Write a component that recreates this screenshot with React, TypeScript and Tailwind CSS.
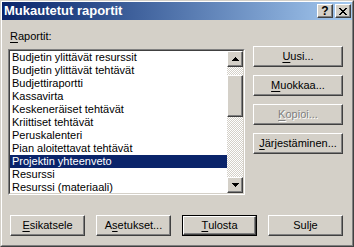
import React from "react";

const FONT = "font-['Liberation_Sans',Arial,sans-serif]";

const items = [
  "Budjetin ylittävät resurssit",
  "Budjetin ylittävät tehtävät",
  "Budjettiraportti",
  "Kassavirta",
  "Keskeneräiset tehtävät",
  "Kriittiset tehtävät",
  "Peruskalenteri",
  "Pian aloitettavat tehtävät",
  "Projektin yhteenveto",
  "Resurssi",
  "Resurssi (materiaali)",
];

function Raised({ className = "", children }: { className?: string; children?: React.ReactNode }) {
  return (
    <div
      className={
        "border border-t-white border-l-white border-b-[#404040] border-r-[#404040] bg-[#d4d0c8] shadow-[inset_-1px_-1px_0_#808080] " +
        className
      }
    >
      {children}
    </div>
  );
}

function Btn({
  children,
  w,
  def,
  disabled,
}: {
  children: React.ReactNode;
  w: string;
  def?: boolean;
  disabled?: boolean;
}) {
  const label = (
    <Raised
      className={
        "flex flex-1 items-center justify-center text-[11px] leading-[13px] " +
        (disabled ? "text-[#808080] [text-shadow:1px_1px_0_#ffffff]" : "text-black")
      }
    >
      {children}
    </Raised>
  );
  if (def) {
    return <div className={"flex h-[21px] border border-black " + w}>{label}</div>;
  }
  return <div className={"flex h-[21px] " + w}>{label}</div>;
}

function Arrow({ up }: { up?: boolean }) {
  return (
    <svg width="7" height="4" viewBox="0 0 7 4" shapeRendering="crispEdges">
      {up ? (
        <polygon points="3.5,0 7,4 0,4" fill="#000" />
      ) : (
        <polygon points="0,0 7,0 3.5,4" fill="#000" />
      )}
    </svg>
  );
}

function U({ children }: { children: React.ReactNode }) {
  return <span className="underline underline-offset-[2px]">{children}</span>;
}

export default function App() {
  return (
    <div className={"w-[354px] h-[247px] border border-t-[#d4d0c8] border-l-[#d4d0c8] border-b-[#404040] border-r-[#404040] bg-[#d4d0c8] " + FONT}>
      <div className="flex h-full flex-col border border-t-white border-l-white border-b-[#808080] border-r-[#808080]">
        {/* Title bar */}
        <div className="flex h-[18px] items-center bg-linear-to-r from-[#0a246a] to-[#a6caf0] pl-[2px] pr-[1px]">
          <span className="flex-1 text-[13px] font-bold leading-[18px] text-white">Mukautetut raportit</span>
          <div className="flex gap-[2px]">
            <Raised className="flex h-[14px] w-[16px] items-center justify-center">
              <span className="text-[12px] font-bold leading-[12px] text-black">?</span>
            </Raised>
            <Raised className="flex h-[14px] w-[16px] items-center justify-center">
              <svg width="8" height="7" viewBox="0 0 8 7" shapeRendering="crispEdges">
                <path d="M0 0h2v1H0zM6 0h2v1H6zM1 1h2v1H1zM5 1h2v1H5zM2 2h4v1H2zM3 3h2v1H3zM2 4h4v1H2zM1 5h2v1H1zM5 5h2v1H5zM0 6h2v1H0zM6 6h2v1H6z" fill="#000" />
              </svg>
            </Raised>
          </div>
        </div>

        {/* Body */}
        <div className="flex flex-1 flex-col pl-[6px] pr-[7px]">
          <div className="flex">
            <div className="flex flex-col">
              <div className="ml-[2px] mt-[10px] h-[13px] text-[11px] leading-[13px] text-black">
                <U>R</U>aportit:
              </div>
              <div className="mt-[6px] h-[146px] w-[237px] border border-t-[#808080] border-l-[#808080] border-b-white border-r-white">
                <div className="flex h-full border border-t-[#404040] border-l-[#404040] border-b-[#d4d0c8] border-r-[#d4d0c8] bg-white">
                  <div className="flex-1 overflow-hidden">
                    {items.map((it, i) => (
                      <div
                        key={it}
                        className={
                          "h-[13px] whitespace-nowrap pl-[2px] text-[11px] leading-[13px] " +
                          (i === 8 ? "bg-[#0a246a] text-white" : "text-black")
                        }
                      >
                        {it}
                      </div>
                    ))}
                  </div>
                  <div className="flex w-[16px] flex-col">
                    <Raised className="flex h-[16px] items-center justify-center">
                      <Arrow up />
                    </Raised>
                    <div className="h-[8px] bg-[repeating-conic-gradient(#d4d0c8_0_25%,#ffffff_0_50%)] bg-[length:2px_2px]" />
                    <Raised className="h-[42px]" />
                    <div className="flex-1 bg-[repeating-conic-gradient(#d4d0c8_0_25%,#ffffff_0_50%)] bg-[length:2px_2px]" />
                    <Raised className="flex h-[16px] items-center justify-center">
                      <Arrow />
                    </Raised>
                  </div>
                </div>
              </div>
            </div>
            <div className="ml-[8px] mt-[26px] flex flex-col gap-[8px]">
              <Btn w="w-[90px]">
                <U>U</U>usi...
              </Btn>
              <Btn w="w-[90px]">
                <U>M</U>uokkaa...
              </Btn>
              <Btn w="w-[90px]" disabled>
                <U>K</U>opioi...
              </Btn>
              <Btn w="w-[90px]">
                <U>J</U>ärjestäminen...
              </Btn>
            </div>
          </div>
          <div className="ml-[2px] mt-[20px] flex gap-[11px]">
            <Btn w="w-[75px]">
              <U>E</U>sikatsele
            </Btn>
            <Btn w="w-[75px]">
              A<U>s</U>etukset...
            </Btn>
            <Btn w="w-[75px]" def>
              <U>T</U>ulosta
            </Btn>
            <Btn w="w-[75px]">Sulje</Btn>
          </div>
        </div>
      </div>
    </div>
  );
}
